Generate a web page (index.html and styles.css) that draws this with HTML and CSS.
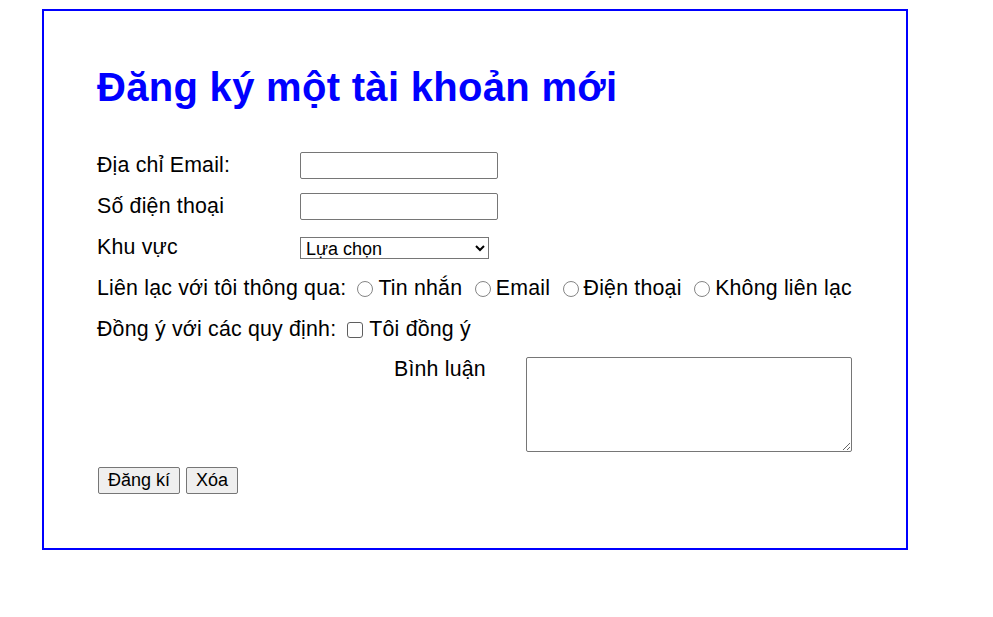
FILE: index.html
```html
<!DOCTYPE html>
<html lang="vi">
<head>
<meta charset="utf-8">
<title>Đăng ký</title>
<link rel="stylesheet" href="styles.css">
</head>
<body>
<div class="box">
  <h1 class="title">Đăng ký một tài khoản mới</h1>
  <form class="form">
    <div class="row">
      <label class="lbl">Địa chỉ Email:</label>
      <input class="txt" type="text">
    </div>
    <div class="row">
      <label class="lbl">Số điện thoại</label>
      <input class="txt" type="text">
    </div>
    <div class="row">
      <label class="lbl">Khu vực</label>
      <select class="sel"><option>Lựa chọn</option></select>
    </div>
    <div class="row">
      <span class="inline-lbl">Liên lạc với tôi thông qua:</span>
      <label class="opt first"><input type="radio" name="c" class="radio">Tin nhắn</label>
      <label class="opt"><input type="radio" name="c" class="radio">Email</label>
      <label class="opt"><input type="radio" name="c" class="radio">Điện thoại</label>
      <label class="opt"><input type="radio" name="c" class="radio">Không liên lạc</label>
    </div>
    <div class="row">
      <span class="inline-lbl">Đồng ý với các quy định:</span>
      <label class="opt first"><input type="checkbox" class="check">Tôi đồng ý</label>
    </div>
    <div class="row-comment">
      <label class="comment-lbl">Bình luận</label>
      <textarea class="area"></textarea>
    </div>
    <div class="buttons">
      <button type="submit" class="btn">Đăng kí</button>
      <button type="reset" class="btn">Xóa</button>
    </div>
  </form>
</div>
</body>
</html>
```

FILE: styles.css
```css
html, body {
  margin: 0;
  padding: 0;
  background: #ffffff;
}
body {
  font-family: "Liberation Sans", Arial, sans-serif;
  color: #000000;
}
.box {
  box-sizing: border-box;
  margin: 9px 0 0 42px;
  width: 866px;
  height: 541px;
  border: 2px solid #0000ff;
  padding: 53px 0 0 53px;
}
.title {
  margin: 0;
  font-size: 40px;
  line-height: 46px;
  font-weight: bold;
  color: #0000ff;
  letter-spacing: 0.3px;
}
.form {
  margin-top: 35px;
  font-size: 21.33px;
  letter-spacing: 0.2px;
}
.row {
  display: flex;
  align-items: center;
  height: 41px;
}
.lbl {
  width: 203px;
  flex: none;
}
.txt {
  box-sizing: border-box;
  width: 198px;
  height: 27px;
  margin: 0;
  border: 1px solid #767676;
  border-radius: 2px;
  padding: 1px 3px;
  font-family: "Liberation Sans", Arial, sans-serif;
  font-size: 18px;
}
.sel {
  box-sizing: border-box;
  width: 189px;
  height: 22px;
  margin: 0;
  padding: 0 0 0 1px;
  border: 1px solid #767676;
  border-radius: 0;
  background: #ffffff;
  font-family: "Liberation Sans", Arial, sans-serif;
  font-size: 18px;
  color: #000;
}
.opt {
  display: inline-flex;
  align-items: center;
  margin-left: 12.5px;
}
.opt.first {
  margin-left: 11px;
}
.radio {
  appearance: none;
  -webkit-appearance: none;
  box-sizing: border-box;
  width: 16px;
  height: 16px;
  margin: 0 5px 0 0;
  border: 1px solid #858585;
  border-radius: 50%;
  background: #ffffff;
}
.check {
  appearance: none;
  -webkit-appearance: none;
  box-sizing: border-box;
  width: 16px;
  height: 16px;
  margin: 0 6px 0 0;
  border: 1px solid #5f5f5f;
  border-radius: 3px;
  background: #ffffff;
}
.row-comment {
  display: flex;
  align-items: flex-start;
  margin-top: 7px;
  padding-left: 297px;
}
.comment-lbl {
  width: 132px;
  flex: none;
  line-height: 24px;
}
.area {
  box-sizing: border-box;
  width: 326px;
  height: 95px;
  margin: 0;
  border: 1px solid #767676;
  border-radius: 2px;
  resize: both;
}
.buttons {
  display: flex;
  gap: 6px;
  margin-top: 15px;
  padding-left: 1px;
}
.btn {
  box-sizing: border-box;
  height: 27px;
  margin: 0;
  padding: 0 9px;
  border: 1px solid #767676;
  border-radius: 2px;
  background: #efefef;
  font-family: "Liberation Sans", Arial, sans-serif;
  font-size: 18px;
  color: #000;
}
```
